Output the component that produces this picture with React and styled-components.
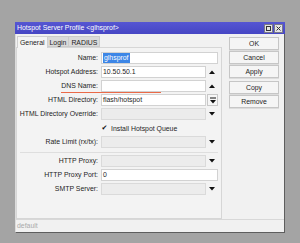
import React from "react";
import styled, { createGlobalStyle } from "styled-components";

const Global = createGlobalStyle`
  html, body { margin: 0; padding: 0; }
  body {
    background: #a4a4a4;
    font-family: "Liberation Sans", Arial, sans-serif;
    font-size: 6.9px;
    color: #1e1e1e;
    width: 300px;
    height: 243px;
    overflow: hidden;
  }
`;

const Page = styled.div`
  padding: 22px 0 0 15px;
`;

const Window = styled.div`
  box-sizing: border-box;
  width: 270px;
  height: 211px;
  background: #f1f1f1;
  border-left: 1px solid #dcdcdc;
  border-right: 1px solid #5e5e5e;
  border-bottom: 1px solid #5e5e5e;
  display: flex;
  flex-direction: column;
`;

const TitleBar = styled.div`
  height: 12px;
  background: linear-gradient(#5656d2, #4646c4);
  color: #fff;
  display: flex;
  align-items: center;
  padding: 0 2px 0 2px;
  margin-left: -1px;
  margin-right: -1px;
`;

const Title = styled.span`
  flex: 1;
  white-space: nowrap;
  line-height: 12px;
`;

const TitleBtn = styled.div`
  box-sizing: border-box;
  width: 9px;
  height: 9px;
  margin-left: 1px;
  background: #e4e4e4;
  border: 1px solid #7a7a8a;
  display: flex;
  align-items: center;
  justify-content: center;
`;

const Body = styled.div`
  flex: 1;
  display: flex;
  gap: 7px;
  padding: 2px 5px 0 0;
  min-height: 0;
`;

const LeftPane = styled.div`
  width: 206px;
  display: flex;
  flex-direction: column;
`;

const Tabs = styled.div`
  display: flex;
  height: 11px;
  padding-left: 1px;
`;

const Tab = styled.div`
  box-sizing: border-box;
  padding: 0 2px;
  height: ${(p) => (p.$active ? "12px" : "11px")};
  margin-bottom: ${(p) => (p.$active ? "-1px" : "0")};
  line-height: 11px;
  background: ${(p) => (p.$active ? "#f4f4f4" : "#dadada")};
  border: 1px solid ${(p) => (p.$active ? "#d0d0d0" : "#cbcbcb")};
  border-bottom: ${(p) => (p.$active ? "none" : "1px solid #cbcbcb")};
  border-left: ${(p) => (p.$active ? "1px solid #d0d0d0" : "none")};
  position: relative;
  z-index: ${(p) => (p.$active ? 1 : 0)};
`;

const Panel = styled.div`
  position: relative;
  flex: 1;
  box-sizing: border-box;
  border: 1px solid #d6d6d6;
  background: #f3f3f3;
  padding: 4px 3px 0 0;
  display: grid;
  grid-template-columns: 84px 105px 12px;
  grid-auto-rows: auto;
  row-gap: 2px;
  align-content: start;
`;

const Label = styled.div`
  grid-column: 1;
  height: 12px;
  text-align: right;
  padding-right: 3px;
  line-height: 12px;
  white-space: nowrap;
`;

const Input = styled.div`
  box-sizing: border-box;
  grid-column: ${(p) => (p.$wide ? "2 / span 2" : "2")};
  height: 12px;
  background: ${(p) => (p.$disabled ? "#ececec" : "#ffffff")};
  border: 1px solid ${(p) => (p.$disabled ? "#dadada" : "#d2d2d2")};
  line-height: 10px;
  padding-left: 1px;
  white-space: nowrap;
  overflow: hidden;
`;

const Selected = styled.span`
  background: #3d86e6;
  color: #fff;
  padding: 0 1px;
  display: inline-block;
  line-height: 10px;
`;

const Arrow = styled.div`
  grid-column: 3;
  height: 12px;
  display: flex;
  align-items: center;
  justify-content: center;
`;

const ArrowBox = styled.div`
  grid-column: 3;
  box-sizing: border-box;
  margin-left: 1px;
  width: 11px;
  height: 12px;
  border: 1px solid #c8c8c8;
  background: #f6f6f6;
  display: flex;
  align-items: center;
  justify-content: center;
`;

const CheckRow = styled.div`
  grid-column: 2 / span 2;
  height: 12px;
  display: flex;
  align-items: center;
  gap: 3px;
`;

const CheckBox = styled.div`
  width: 7px;
  height: 7px;
  display: flex;
  align-items: center;
  justify-content: center;
  font-size: 7px;
  color: #111;
  font-family: "DejaVu Sans", sans-serif;
`;

const Separator = styled.div`
  grid-column: 1 / span 3;
  height: 3px;
  box-sizing: border-box;
  border-bottom: 1px solid #dedede;
  margin-left: 3px;
`;

const RedMark = styled.div`
  position: absolute;
  left: 44px;
  top: 44px;
  width: 100px;
  height: 1px;
  background: #ea6a48;
`;

const RightPane = styled.div`
  width: 50px;
  display: flex;
  flex-direction: column;
  padding-top: 1px;
`;

const Button = styled.div`
  box-sizing: border-box;
  height: 13px;
  margin-bottom: ${(p) => (p.$gapAfter ? "3px" : "1px")};
  border: 1px solid #c6c6c6;
  background: #f5f5f5;
  text-align: center;
  line-height: 11px;
  box-shadow: 0 1px 0 #dcdcdc;
`;

const StatusBar = styled.div`
  height: 12px;
  border-top: 1px solid #d8d8d8;
  color: #aaaaaa;
  padding-left: 1px;
  line-height: 12px;
`;

const Up = () => (
  <svg width="6" height="4" viewBox="0 0 6 4">
    <path d="M0 4 L3 0.5 L6 4 Z" fill="#111" />
  </svg>
);

const Down = () => (
  <svg width="6" height="4" viewBox="0 0 6 4">
    <path d="M0 0 L6 0 L3 3.5 Z" fill="#111" />
  </svg>
);

const DirIcon = () => (
  <svg width="6" height="7" viewBox="0 0 6 7">
    <rect x="0" y="0.5" width="6" height="1" fill="#111" />
    <path d="M0 3 L6 3 L3 6.5 Z" fill="#111" />
  </svg>
);

export default function App() {
  return (
    <>
      <Global />
      <Page>
        <Window>
          <TitleBar>
            <Title>Hotspot Server Profile &lt;glhsprof&gt;</Title>
            <TitleBtn>
              <svg width="5" height="5" viewBox="0 0 5 5">
                <rect x="0.5" y="0.5" width="4" height="4" fill="none" stroke="#333" strokeWidth="1" />
              </svg>
            </TitleBtn>
            <TitleBtn>
              <svg width="5" height="5" viewBox="0 0 5 5">
                <path d="M0.5 0.5 L4.5 4.5 M4.5 0.5 L0.5 4.5" stroke="#333" strokeWidth="1" />
              </svg>
            </TitleBtn>
          </TitleBar>
          <Body>
            <LeftPane>
              <Tabs>
                <Tab $active>General</Tab>
                <Tab>Login</Tab>
                <Tab>RADIUS</Tab>
              </Tabs>
              <Panel>
                <Label>Name:</Label>
                <Input $wide>
                  <Selected>glhsprof</Selected>
                </Input>

                <Label>Hotspot Address:</Label>
                <Input>10.50.50.1</Input>
                <Arrow><Up /></Arrow>

                <Label>DNS Name:</Label>
                <Input />
                <Arrow><Up /></Arrow>

                <Label>HTML Directory:</Label>
                <Input>flash/hotspot</Input>
                <ArrowBox><DirIcon /></ArrowBox>

                <Label>HTML Directory Override:</Label>
                <Input $disabled />
                <Arrow><Down /></Arrow>

                <CheckRow>
                  <CheckBox>✔</CheckBox>
                  <span>Install Hotspot Queue</span>
                </CheckRow>

                <Label>Rate Limit (rx/tx):</Label>
                <Input $disabled />
                <Arrow><Down /></Arrow>

                <Separator />

                <Label>HTTP Proxy:</Label>
                <Input $disabled />
                <Arrow><Down /></Arrow>

                <Label>HTTP Proxy Port:</Label>
                <Input $wide>0</Input>

                <Label>SMTP Server:</Label>
                <Input $disabled />
                <Arrow><Down /></Arrow>

                <RedMark />
              </Panel>
            </LeftPane>
            <RightPane>
              <Button>OK</Button>
              <Button>Cancel</Button>
              <Button $gapAfter>Apply</Button>
              <Button>Copy</Button>
              <Button>Remove</Button>
            </RightPane>
          </Body>
          <StatusBar>default</StatusBar>
        </Window>
      </Page>
    </>
  );
}
